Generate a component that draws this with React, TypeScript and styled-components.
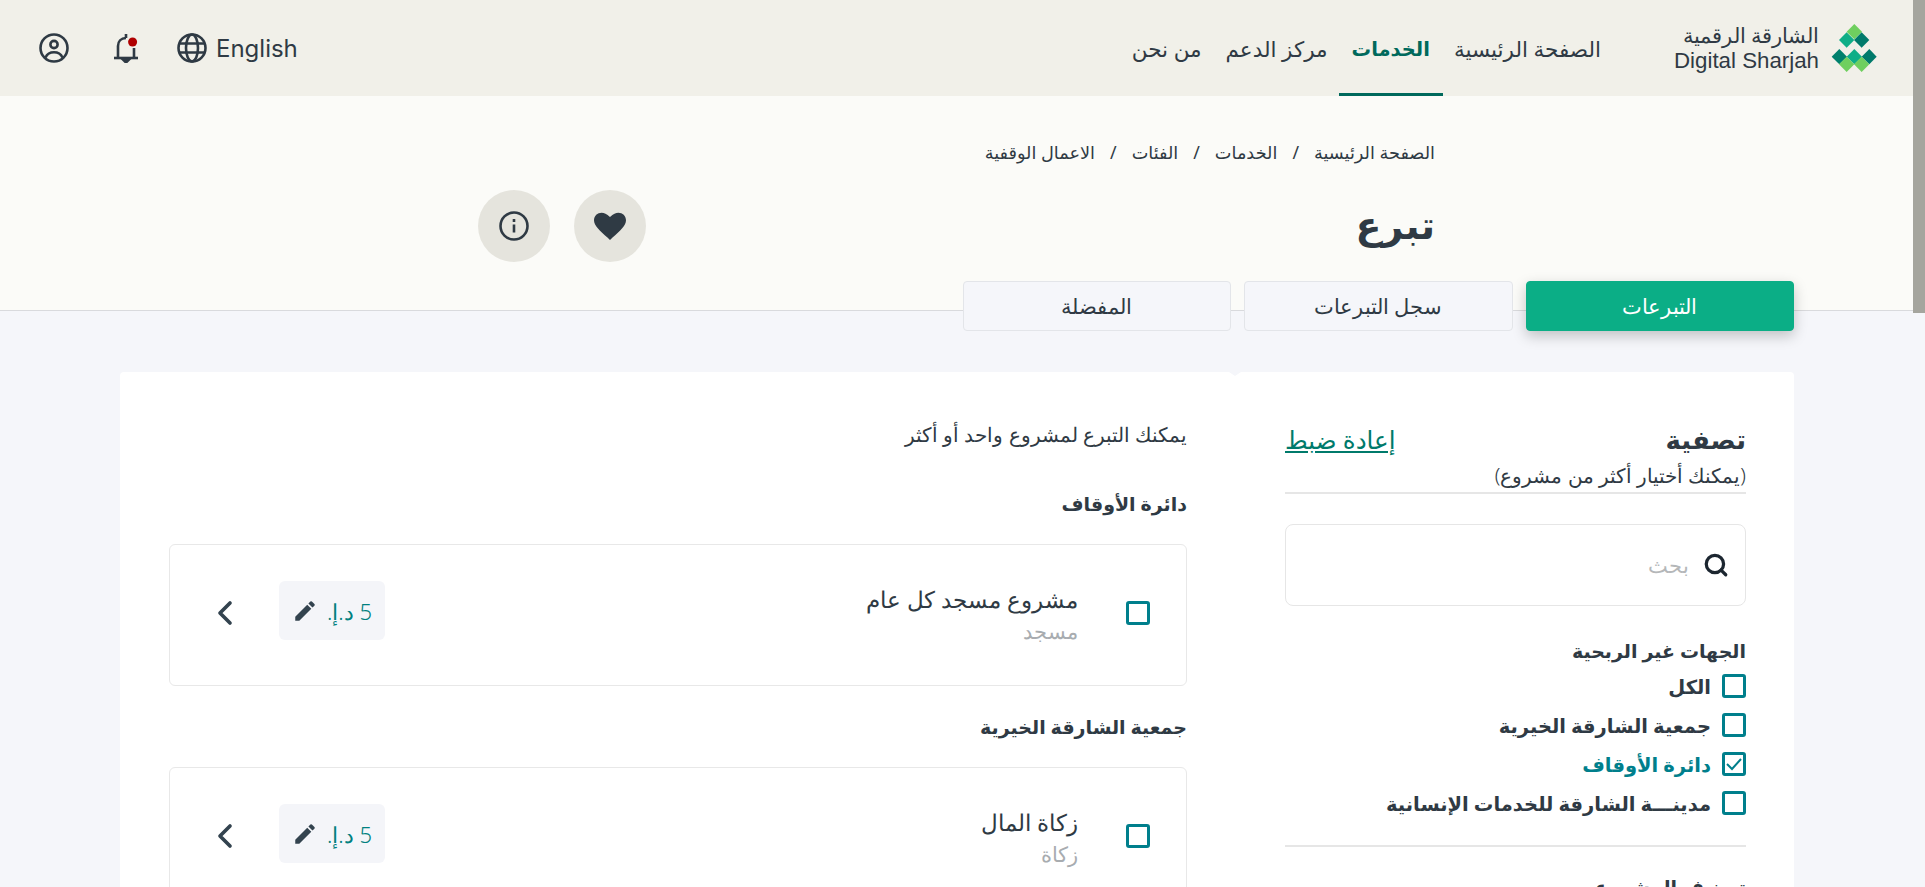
import React from 'react';
import styled, { createGlobalStyle } from 'styled-components';
import { Search, ChevronLeft } from 'lucide-react';

const DARK = '#2f3a44';
const TEAL = '#007f8c';
const GREEN = '#0bae86';
const PAGE_BG = '#f5f6fa';

const GlobalStyle = createGlobalStyle`
  html {
    overflow-x: hidden;
  }
  body {
    margin: 0;
    background: ${PAGE_BG};
    color: ${DARK};
    font-family: "Noto Sans", "DejaVu Sans", sans-serif;
  }
`;

const ScrollThumb = styled.div`
  position: fixed;
  top: 0;
  right: 0;
  width: 12px;
  height: 313px;
  background: #a5a59e;
`;

const Page = styled.div`
  direction: rtl;
  width: 1913px;
  min-height: 2513px;
`;

const Header = styled.header`
  height: 96px;
  background: #f1f0e9;
  display: flex;
  align-items: center;
  justify-content: space-between;
  padding: 0 36px 0 39px;
`;

const Brand = styled.div`
  display: flex;
  align-items: center;
  gap: 12px;
  margin-left: 73px;
`;

const BrandText = styled.div`
  display: flex;
  flex-direction: column;
  align-items: flex-start;
  font-size: 21px;
  line-height: 25px;
  color: ${DARK};
  font-weight: 300;
`;

const BrandLatin = styled.span`
  font-family: "Liberation Sans", sans-serif;
  font-size: 22.3px;
`;

const Nav = styled.nav`
  display: flex;
  align-items: stretch;
  gap: 24px;
  height: 96px;
  flex: 1;
`;

const NavItem = styled.a<{ $active?: boolean }>`
  position: relative;
  display: flex;
  align-items: center;
  font-size: ${(p) => (p.$active ? 19.5 : 21.5)}px;
  color: ${(p) => (p.$active ? '#00695c' : DARK)};
  font-weight: ${(p) => (p.$active ? 700 : 400)};

  ${(p) =>
    p.$active &&
    `
    &::after {
      content: '';
      position: absolute;
      left: -13px;
      right: -13px;
      bottom: 0;
      height: 3px;
      background: #00695c;
    }
  `}
`;

const Tools = styled.div`
  display: flex;
  align-items: center;
  gap: 39px;
  direction: ltr;
`;

const UserSlot = styled.span`
  display: flex;
  margin-right: 6px;
`;

const LangSwitch = styled.div`
  display: flex;
  align-items: center;
  gap: 9px;
  font-family: Inter, sans-serif;
  font-size: 24px;
`;

const Hero = styled.section`
  height: 214px;
  background: #fbfbf8;
  border-bottom: 1px solid #d9dadd;
  padding: 0 478px;
  display: flex;
  flex-direction: column;
`;

const Breadcrumb = styled.div`
  display: flex;
  gap: 15px;
  margin-top: 44px;
  font-size: 17.7px;
  line-height: 24px;
`;

const TitleRow = styled.div`
  display: flex;
  align-items: center;
  justify-content: space-between;
  margin-top: 24px;
`;

const Title = styled.h1`
  margin: 0 0 4px;
  font-size: 38px;
  font-weight: 600;
  line-height: 72px;
`;

const RoundActions = styled.div`
  display: flex;
  gap: 24px;
`;

const RoundButton = styled.button`
  width: 72px;
  height: 72px;
  border: 0;
  border-radius: 50%;
  background: #e5e4dd;
  display: flex;
  align-items: center;
  justify-content: center;
  padding: 0;
`;

const Tabs = styled.div`
  display: flex;
  gap: 13px;
  width: 1674px;
  margin: -30px 119px 0 120px;
  position: relative;
`;

const Tab = styled.div<{ $active?: boolean }>`
  width: 268.5px;
  height: 50px;
  box-sizing: border-box;
  border-radius: 4px;
  display: flex;
  align-items: center;
  justify-content: center;
  font-size: 20.5px;
  font-weight: 300;
  background: ${(p) => (p.$active ? GREEN : PAGE_BG)};
  color: ${(p) => (p.$active ? '#fff' : DARK)};
  border: 1px solid ${(p) => (p.$active ? GREEN : '#e3e5e9')};
  box-shadow: ${(p) => (p.$active ? '0 5px 14px rgba(0, 0, 0, 0.22)' : 'none')};
`;

const Card = styled.main`
  position: relative;
  width: 1674px;
  box-sizing: border-box;
  margin: 41px 119px 0 120px;
  background: #fff;
  border-radius: 4px;
  padding: 45px 48px 48px 49px;
  display: grid;
  grid-template-columns: 461px 1018px;
  justify-content: space-between;
  align-items: start;

  &::before {
    content: '';
    position: absolute;
    top: 0;
    left: 1109px;
    border-left: 6px solid transparent;
    border-right: 6px solid transparent;
    border-top: 4px solid ${PAGE_BG};
  }
`;

const FilterHead = styled.div`
  display: flex;
  justify-content: space-between;
  align-items: center;
`;

const FilterTitle = styled.h2`
  margin: 0;
  font-size: 26px;
  font-weight: 700;
  line-height: 44px;
`;

const ResetLink = styled.a`
  font-size: 24.5px;
  font-weight: 500;
  color: #007a6b;
  text-decoration: underline;
`;

const FilterHint = styled.div`
  font-size: 20.2px;
  font-weight: 300;
  line-height: 28px;
  padding-bottom: 3px;
  border-bottom: 2px solid #e6e6e6;
`;

const SearchBox = styled.div`
  margin-top: 30px;
  height: 82px;
  box-sizing: border-box;
  border: 1px solid #e6e6e6;
  border-radius: 8px;
  display: flex;
  align-items: center;
  gap: 12px;
  padding: 0 16px;
`;

const SearchInput = styled.input`
  flex: 1;
  border: 0;
  outline: 0;
  background: none;
  font-family: inherit;
  font-size: 21px;
  font-weight: 300;
  &::placeholder {
    color: #b5b7b9;
  }
`;

const GroupTitle = styled.h3`
  margin: 30px 0 0;
  font-size: 19px;
  font-weight: 600;
  line-height: 30px;
`;

const CategoryTitle = styled(GroupTitle)`
  margin-top: 25px;
`;

const CheckList = styled.div`
  display: flex;
  flex-direction: column;
  gap: 15px;
  margin-top: 8px;
`;

const CheckRow = styled.label<{ $checked?: boolean }>`
  display: flex;
  align-items: center;
  gap: 11px;
  height: 24px;
  font-size: 19.5px;
  font-weight: 600;
  color: ${(p) => (p.$checked ? TEAL : DARK)};
`;

const Box = styled.span`
  width: 24px;
  height: 24px;
  box-sizing: border-box;
  flex: none;
  border: 3px solid ${TEAL};
  border-radius: 3px;
  display: flex;
  align-items: center;
  justify-content: center;
`;

const Rule = styled.hr`
  margin: 30px 0 0;
  border: 0;
  border-top: 2px solid #e6e6e6;
`;

const Intro = styled.p`
  margin: 3px 0 0;
  padding-bottom: 13px;
  font-size: 20px;
  font-weight: 300;
  line-height: 30px;
`;

const OrgTitle = styled.h3`
  margin: 26px 0 0;
  font-size: 19px;
  font-weight: 600;
  line-height: 30px;
`;

const ProjectCard = styled.article`
  margin-top: 25px;
  height: 142px;
  box-sizing: border-box;
  border: 1px solid #e8e8e8;
  border-radius: 6px;
  display: flex;
  align-items: center;
  padding: 0 36px 4px 35px;
`;

const ProjectInfo = styled.div`
  flex: 1;
  margin: 2px 48px 0 0;
`;

const ProjectName = styled.div`
  font-size: 23px;
  font-weight: 300;
  line-height: 34px;
`;

const ProjectType = styled.div`
  font-size: 21px;
  font-weight: 300;
  line-height: 30px;
  color: #a8acb0;
`;

const AmountPill = styled.div`
  width: 106px;
  height: 59px;
  background: #f4f5f9;
  border-radius: 6px;
  display: flex;
  align-items: center;
  justify-content: center;
  gap: 9px;
  font-size: 22px;
  font-weight: 300;
  color: #008080;
  margin: 0 0 5px 34px;
`;

const PencilIcon = () => (
  <svg width="26" height="26" viewBox="0 0 24 24" fill="#33434f">
    <path d="M3 17.25V21h3.75L17.81 9.94l-3.75-3.75L3 17.25zM20.71 7.04a1 1 0 0 0 0-1.41l-2.34-2.34a1 1 0 0 0-1.41 0l-1.83 1.83 3.75 3.75 1.83-1.83z" />
  </svg>
);

const LogoMark = () => (
  <svg width="46" height="48" viewBox="516 40 136 144">
    <path fill="#6fcf5f" d="M585 40l23 23-23 23-23-23z" />
    <path fill="#0fae87" d="M562 65l23 23-23 23-23-23z" />
    <path fill="#007a6b" d="M607 65l23 23-23 23-23-23z" />
    <path fill="#00806d" d="M540 115l23 23-23 23-23-23z" />
    <path fill="#0fae87" d="M585 115l23 23-23 23-23-23z" />
    <path fill="#007a6b" d="M630 115l22 23-22 23-23-23z" />
    <path fill="#6fcf5f" d="M562 138l23 23-23 23-23-23z" />
    <path fill="#6fcf5f" d="M607 138l23 23-23 23-23-23z" />
  </svg>
);

const UserIcon = () => (
  <svg width="30" height="30" viewBox="0 0 30 30" fill="none" stroke={DARK} strokeWidth="2.6">
    <circle cx="15" cy="15" r="13.5" />
    <circle cx="15" cy="11.5" r="3.6" />
    <path d="M6.5 24.5c1.6-3.4 4.8-5.2 8.5-5.2s6.9 1.8 8.5 5.2" />
  </svg>
);

const BellIcon = () => (
  <svg width="24" height="30" viewBox="0 0 24 30" fill="none" stroke={DARK} strokeWidth="2.6">
    <path d="M0 25h24" />
    <path d="M4 25V13c0-4.500 3-8 8-8M20 15v10" />
    <path d="M12 1v4" />
    <path d="M9.500 27h5l-2.500 2.500z" fill={DARK} />
    <circle cx="18.600" cy="9" r="4.500" fill="#b00000" stroke="none" />
  </svg>
);

const GlobeIcon = () => (
  <svg width="30" height="30" viewBox="0 0 30 30" fill="none" stroke={DARK} strokeWidth="2.6">
    <circle cx="15" cy="15" r="13.5" />
    <ellipse cx="15" cy="15" rx="6" ry="13.5" />
    <path d="M2 10.500h26M2 19.500h26" />
  </svg>
);

const InfoIcon = () => (
  <svg width="30" height="30" viewBox="0 0 30 30" fill="none" stroke={DARK} strokeWidth="2.6">
    <circle cx="15" cy="15" r="13.5" />
    <path d="M15 13.500v8M15 8v3" />
  </svg>
);

const HeartIcon = () => (
  <svg width="32" height="28" viewBox="0 0 24 21" fill={DARK}>
    <path d="M12 21l-1.700-1.600C4.200 13.900 0 10.100 0 6.100 0 2.800 2.600.5 5.700.5c1.900 0 3.800.9 6.300 3.200C14.500 1.400 16.400.5 18.300.5 21.400.5 24 2.800 24 6.100c0 4-4.200 7.800-10.300 13.300z" />
  </svg>
);

const filters = [
  { label: 'الكل' },
  { label: 'جمعية الشارقة الخيرية' },
  { label: 'دائرة الأوقاف', checked: true },
  { label: 'مدينـــة الشارقة للخدمات الإنسانية' },
];

const sections = [
  { org: 'دائرة الأوقاف', name: 'مشروع مسجد كل عام', type: 'مسجد' },
  { org: 'جمعية الشارقة الخيرية', name: 'زكاة المال', type: 'زكاة' },
];

const App: React.FC = () => {
  return (
    <Page>
      <GlobalStyle />
      <ScrollThumb />
      <Header>
        <Brand>
          <LogoMark />
          <BrandText>
            <span>الشارقة الرقمية</span>
            <BrandLatin>Digital Sharjah</BrandLatin>
          </BrandText>
        </Brand>
        <Nav>
          <NavItem>الصفحة الرئيسية</NavItem>
          <NavItem $active>الخدمات</NavItem>
          <NavItem>مركز الدعم</NavItem>
          <NavItem>من نحن</NavItem>
        </Nav>
        <Tools>
          <UserSlot>
            <UserIcon />
          </UserSlot>
          <BellIcon />
          <LangSwitch>
            <GlobeIcon />
            English
          </LangSwitch>
        </Tools>
      </Header>
      <Hero>
        <Breadcrumb>
          <span>الصفحة الرئيسية</span>
          <span>/</span>
          <span>الخدمات</span>
          <span>/</span>
          <span>الفئات</span>
          <span>/</span>
          <span>الاعمال الوقفية</span>
        </Breadcrumb>
        <TitleRow>
          <Title>تبرع</Title>
          <RoundActions>
            <RoundButton>
              <HeartIcon />
            </RoundButton>
            <RoundButton>
              <InfoIcon />
            </RoundButton>
          </RoundActions>
        </TitleRow>
      </Hero>
      <Tabs>
        <Tab $active>التبرعات</Tab>
        <Tab>سجل التبرعات</Tab>
        <Tab>المفضلة</Tab>
      </Tabs>
      <Card>
        <aside>
          <FilterHead>
            <FilterTitle>تصفية</FilterTitle>
            <ResetLink>إعادة ضبط</ResetLink>
          </FilterHead>
          <FilterHint>(يمكنك أختيار أكثر من مشروع)</FilterHint>
          <SearchBox>
            <Search size={26} color="#1c2630" strokeWidth={3} />
            <SearchInput placeholder="بحث" />
          </SearchBox>
          <GroupTitle>الجهات غير الربحية</GroupTitle>
          <CheckList>
            {filters.map((item) => (
              <CheckRow key={item.label} $checked={item.checked}>
                <Box>
                  {item.checked && (
                    <svg width="18" height="18" viewBox="0 0 18 18" fill="none" stroke={TEAL} strokeWidth="2">
                      <path d="M2 9l5 5 9-10" />
                    </svg>
                  )}
                </Box>
                {item.label}
              </CheckRow>
            ))}
          </CheckList>
          <Rule />
          <CategoryTitle>تصنيف المشروع</CategoryTitle>
        </aside>
        <section>
          <Intro>يمكنك التبرع لمشروع واحد أو أكثر</Intro>
          {sections.map((item) => (
            <div key={item.org}>
              <OrgTitle>{item.org}</OrgTitle>
              <ProjectCard>
                <Box />
                <ProjectInfo>
                  <ProjectName>{item.name}</ProjectName>
                  <ProjectType>{item.type}</ProjectType>
                </ProjectInfo>
                <AmountPill>
                  <span>5 د.إ.</span>
                  <PencilIcon />
                </AmountPill>
                <ChevronLeft size={40} color="#33434f" strokeWidth={2.2} />
              </ProjectCard>
            </div>
          ))}
        </section>
      </Card>
    </Page>
  );
};

export default App;
